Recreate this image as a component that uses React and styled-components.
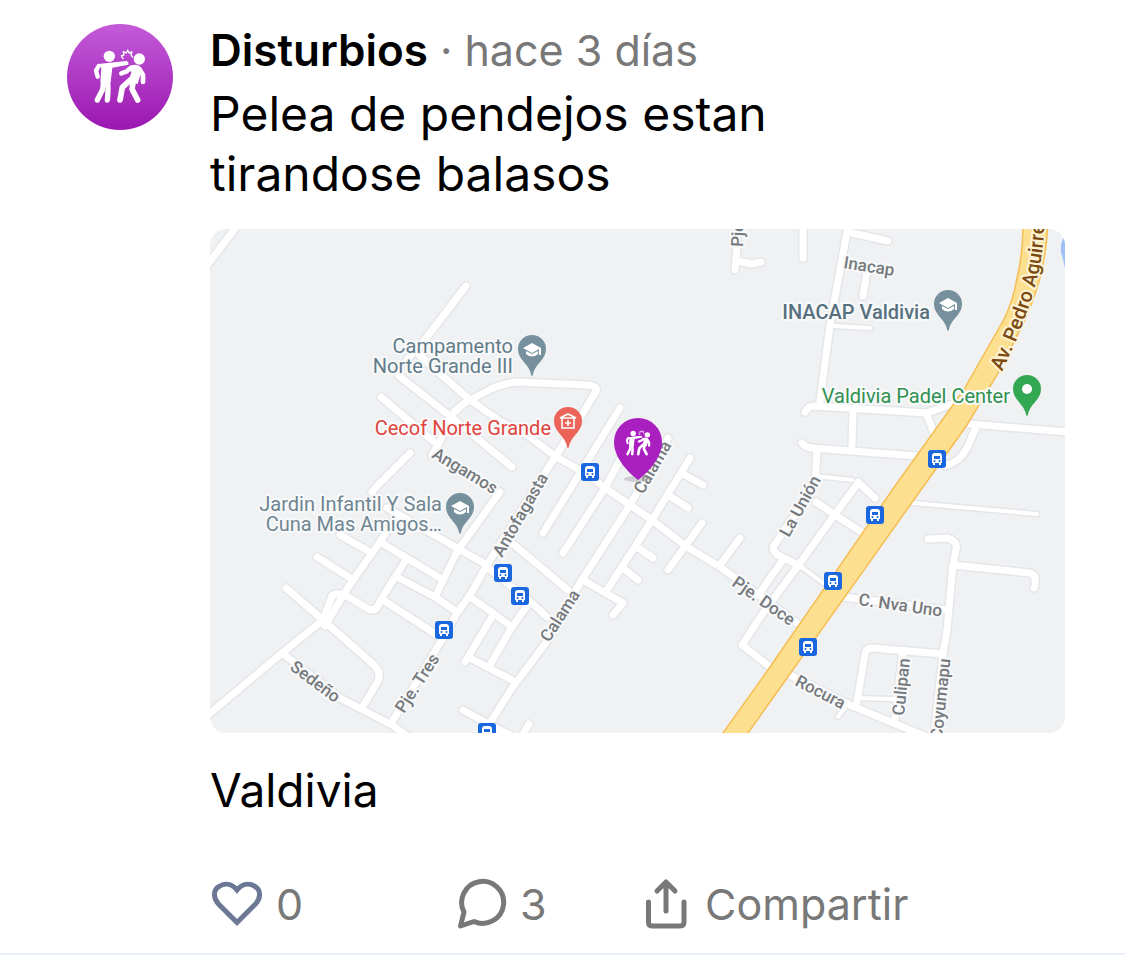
import React, { useState } from "react";
import styled, { createGlobalStyle } from "styled-components";

const GlobalStyle = createGlobalStyle`
  * {
    box-sizing: border-box;
  }
  body {
    margin: 0;
    background-color: #ffffff;
    font-family: Inter, "Liberation Sans", sans-serif;
  }
`;

const Post = styled.article`
  display: flex;
  align-items: flex-start;
  gap: 37px;
  padding: 24px 60px 19px 67px;
  border-bottom: 2px solid #e9eefb;
`;

const Avatar = styled.div`
  display: flex;
  align-items: center;
  justify-content: center;
  flex: none;
  width: 106px;
  height: 106px;
  border-radius: 50%;
  background: linear-gradient(#c35bd8, #9a17b0);
`;

const AvatarIcon = styled.svg`
  width: 56px;
  height: 56px;
`;

const Content = styled.div`
  flex: 1;
  min-width: 0;
`;

const Header = styled.header`
  display: flex;
  align-items: baseline;
  gap: 12px;
  font-size: 43px;
  line-height: 52px;
  color: #787878;
`;

const Category = styled.h1`
  margin: 0;
  font-size: 44px;
  font-weight: 600;
  color: #000000;
`;

const Message = styled.p`
  margin: 8px 0 25px;
  font-size: 48px;
  line-height: 60px;
  white-space: pre-line;
  color: #000000;
`;

const MapImage = styled.svg`
  display: block;
  width: 100%;
  height: auto;
  border-radius: 16px;
  background-color: #f0f1f3;
  font-family: Roboto, sans-serif;
`;

const Place = styled.p`
  margin: 27px 0 54px;
  font-size: 46px;
  line-height: 60px;
  color: #000000;
`;

const Actions = styled.footer`
  display: grid;
  grid-template-columns: 29% 22% auto;
  align-items: center;
`;

const Action = styled.button`
  display: flex;
  align-items: center;
  gap: ${(props) => props.$gap || "14px"};
  padding: 0;
  border: none;
  background: none;
  font-family: inherit;
  font-size: 43px;
  line-height: 60px;
  color: #787878;
  cursor: pointer;
`;

const ActionIcon = styled.svg`
  flex: none;
  width: ${(props) => props.$width || "52px"};
  height: 52px;
  fill: none;
  stroke: ${(props) => props.$color || "#787878"};
  stroke-width: 5;
  stroke-linecap: round;
  stroke-linejoin: ${(props) => props.$join || "round"};
`;

const RoadCasing = styled.path`
  fill: none;
  stroke: #e4e6e9;
  stroke-width: ${(props) => props.$size + 3};
  stroke-linecap: round;
  stroke-linejoin: round;
`;

const RoadFill = styled.path`
  fill: none;
  stroke: #ffffff;
  stroke-width: ${(props) => props.$size};
  stroke-linecap: round;
  stroke-linejoin: round;
`;

const RoadLabel = styled.text`
  font-size: ${(props) => props.$size || "17px"};
  font-weight: 500;
  fill: ${(props) => props.$color || "#76797d"};
  stroke: ${(props) => props.$halo || "#f8f9fa"};
  stroke-width: 4;
  stroke-linejoin: round;
  paint-order: stroke;
`;

const PlaceLabel = styled.text`
  font-size: 20px;
  font-weight: ${(props) => props.$weight || 400};
  text-anchor: end;
  fill: ${(props) => props.$color};
  stroke: #f8f9fa;
  stroke-width: 4;
  stroke-linejoin: round;
  paint-order: stroke;
`;

const thin = [
  "M833 326L870 328",
  "M913 503L1037 514",
  "M857 698L893 699",
  "M815 476L852 480",
  "M800 566L823 583",
  "M333 612L343 594",
  "M845 707L838 717",
];

const roads = [
  "M208 264L237 226",
  "M466 286L427 337L407 360",
  "M399 376L450 416L512 467",
  "M420 356L470 400L500 421L527 435L555 456L590 476L605 488L630 505L652 520L687 547L720 567L797 623",
  "M381 397L433 441",
  "M432 455L440 441L450 418Q458 406 470 400L487 391Q500 384 517 382L587 385Q600 386 595 393L580 418L548 468L487 565L470 595L457 613L440 643L392 722",
  "M410 453L377 486L372 492",
  "M340 535L370 552",
  "M395 518L380 542L353 580L345 592L325 626",
  "M387 508L457 548L487 565",
  "M317 557L352 579",
  "M286 588L323 620L373 664Q382 672 378 681L362 708",
  "M208 715L282 653L323 620L332 596Q336 592 345 595L370 610L376 609L382 598L407 558",
  "M380 542L440 578",
  "M397 577L435 597L457 612",
  "M383 600L437 635",
  "M500 492L458 550L435 597",
  "M282 653L340 698L392 725L410 738",
  "M470 597L493 613L512 627",
  "M493 615L465 662",
  "M470 658L512 680",
  "M490 665L512 627L527 606",
  "M463 710L492 726L512 736",
  "M488 726L512 688L548 640L580 583L630 505L668 438",
  "M563 553L605 488L622 456",
  "M543 533L572 486L620 408",
  "M512 543L568 590",
  "M487 567L532 603L547 617",
  "M583 580L623 603L613 615",
  "M607 590L652 520L690 458",
  "M637 547L653 558",
  "M623 568L638 580",
  "M668 495L688 508",
  "M683 474L703 485",
  "M702 523L668 570",
  "M740 538L720 565",
  "M521 738L529 724",
  "M737 226L737 246L735 270",
  "M737 261L752 264L761 262",
  "M803 226L803 258",
  "M848 226L830 325L820 401",
  "M852 233L888 241",
  "M867 271L863 296",
  "M805 412Q808 406 814 406L927 413L952 404",
  "M853 410L852 446",
  "M802 443Q806 448 812 448L917 456",
  "M927 415L935 436",
  "M970 424L1068 432",
  "M977 425L967 448Q960 462 945 466",
  "M817 450L815 485L773 547Q774 554 780 556L800 566",
  "M816 502L835 515L863 533",
  "M858 483L833 517L800 563L763 613L742 645L770 667L790 675",
  "M783 560L770 578L760 593",
  "M858 482L875 498",
  "M928 539L948 538Q958 542 956 549L953 565L947 630L943 653L934 738",
  "M953 565L1030 573Q1038 576 1034 588",
  "M843 597L945 610",
  "M943 654L872 648Q866 648 865 654L857 702",
  "M903 650L895 718",
  "M790 675L850 705L927 737",
];

const busStops = [
  [590, 472],
  [503, 573],
  [520, 596],
  [444, 630],
  [487, 732],
  [937, 459],
  [875, 515],
  [833, 581],
  [808, 647],
];

const roadLabels = [
  { text: "Angamos", x: 431, y: 457, angle: 31 },
  { text: "Antofagasta", x: 502, y: 558, angle: -60 },
  { text: "Calama", x: 549, y: 643, angle: -57 },
  { text: "Calama", x: 643, y: 495, angle: -60 },
  { text: "Pje. Tres", x: 404, y: 714, angle: -57 },
  { text: "Sedeño", x: 289, y: 669, angle: 37 },
  { text: "Pje. Doce", x: 731, y: 585, angle: 35 },
  { text: "La Unión", x: 789, y: 538, angle: -61 },
  { text: "C. Nva Uno", x: 858, y: 605, angle: 8 },
  { text: "Rocura", x: 794, y: 685, angle: 27 },
  { text: "Culipan", x: 904, y: 716, angle: -84 },
  { text: "Coyumapu", x: 942, y: 740, angle: -84 },
  { text: "Inacap", x: 843, y: 268, angle: 9 },
  { text: "Pje.", x: 743, y: 247, angle: -88 },
];

const FightShape = () => (
  <g fill="none" stroke="#ffffff" strokeLinecap="round" strokeLinejoin="round">
    <circle cx="177" cy="137" r="17" fill="#ffffff" stroke="none" />
    <circle cx="267" cy="145" r="17" fill="#ffffff" stroke="none" />
    <path
      d="M144 160L228 151Q236 153 234 162L186 171L181 215L150 215L153 172Z"
      fill="#ffffff"
      stroke="none"
    />
    <path d="M145 166L137 180L142 198" strokeWidth="13" />
    <path d="M160 210L157 236L141 268" strokeWidth="16" />
    <path d="M171 208Q175 230 171 268" strokeWidth="16" />
    <path
      d="M236 168Q250 158 268 166Q276 174 271 190L262 220L234 212L243 186Z"
      fill="#ffffff"
      stroke="none"
    />
    <path d="M242 171L229 182L213 188" strokeWidth="14" />
    <path d="M268 176L278 193L278 214" strokeWidth="14" />
    <path d="M243 205L216 230L209 268" strokeWidth="17" />
    <path d="M249 212L245 235L262 268" strokeWidth="17" />
    <path
      d="M218 144L213 135L221 133L219 123L228 127L232 118L236 127L245 124L242 133L247 139"
      strokeWidth="4"
    />
  </g>
);

const BusStop = ({ x, y }) => (
  <g transform={`translate(${x} ${y})`}>
    <rect x="-9" y="-9" width="18" height="18" rx="3" fill="#1a67e0" />
    <path
      d="M-5 4V-3Q-5 -6 -2 -6H2Q5 -6 5 -3V4H4V6H2V4H-2V6H-4V4Z"
      fill="#ffffff"
    />
    <path d="M-3 -3H3V0H-3Z" fill="#1a67e0" />
    <circle cx="-2.5" cy="2" r="1" fill="#1a67e0" />
    <circle cx="2.5" cy="2" r="1" fill="#1a67e0" />
  </g>
);

const Pin = ({ x, y, color, children }) => (
  <g transform={`translate(${x} ${y})`}>
    <path
      d="M0 27C-1 27 -1 24 -2 22C-5 14 -14 10 -14 0A14 14 0 0 1 14 0C14 10 5 14 2 22C1 24 1 27 0 27Z"
      fill={color}
    />
    {children}
  </g>
);

const SchoolPin = ({ x, y }) => (
  <Pin x={x} y={y} color="#76909d">
    <path d="M-9 -1L0 -6L9 -1V6H7V0L0 4Z" fill="#ffffff" />
    <path d="M-6 2L0 5L6 2V5Q0 10 -6 5Z" fill="#ffffff" />
  </Pin>
);

const ZoneMap = () => (
  <MapImage viewBox="210 229 855 504" role="img" aria-label="Valdivia">
    <path d="M1066 236Q1060 240 1061 252Q1064 262 1066 274Z" fill="#9dc1f8" />
    {thin.map((d) => (
      <RoadCasing key={d} d={d} $size={4} />
    ))}
    {roads.map((d) => (
      <RoadCasing key={d} d={d} $size={7} />
    ))}
    {thin.map((d) => (
      <RoadFill key={d} d={d} $size={4} />
    ))}
    {roads.map((d) => (
      <RoadFill key={d} d={d} $size={7} />
    ))}
    <path
      d="M1023 220Q1023 255 1017 278Q1013 302 1003 321L963 391L895 486L770 667L718 740L743 740L770 702L928 480L967 425L997 375Q1012 346 1022 326Q1034 300 1040 278Q1047 250 1048 220Z"
      fill="#fce08f"
      stroke="#f6bd55"
      strokeWidth="1.5"
    />
    {roadLabels.map((r) => (
      <RoadLabel
        key={r.x}
        transform={`translate(${r.x} ${r.y}) rotate(${r.angle})`}
      >
        {r.text}
      </RoadLabel>
    ))}
    <path
      id="avenue"
      d="M1002 372Q1016 342 1023 323Q1035 292 1040 266Q1044 245 1046 200"
      fill="none"
    />
    <RoadLabel $size="20px" $color="#7b4a12" $halo="#fdf3d4">
      <textPath href="#avenue">Av. Pedro Aguirre</textPath>
    </RoadLabel>
    {busStops.map(([x, y]) => (
      <BusStop key={x} x={x} y={y} />
    ))}

    <PlaceLabel x="513" y="353" $color="#627c89">
      Campamento
    </PlaceLabel>
    <PlaceLabel x="513" y="373" $color="#627c89">
      Norte Grande III
    </PlaceLabel>
    <SchoolPin x={532} y={349} />
    <PlaceLabel x="551" y="435" $color="#e0443e">
      Cecof Norte Grande
    </PlaceLabel>
    <Pin x={568} y={421} color="#ec6359">
      <path
        d="M-6 -3V7H6V-3M-8 -3L0 -7L8 -3ZM0 -1V5M-3 2H3"
        fill="none"
        stroke="#ffffff"
        strokeWidth="1.6"
      />
    </Pin>
    <PlaceLabel x="442" y="511" $color="#6f8591">
      Jardin Infantil Y Sala
    </PlaceLabel>
    <PlaceLabel x="442" y="531" $color="#6f8591">
      Cuna Mas Amigos…
    </PlaceLabel>
    <SchoolPin x={460} y={507} />
    <PlaceLabel x="930" y="319" $color="#56707e" $weight={500}>
      INACAP Valdivia
    </PlaceLabel>
    <SchoolPin x={948} y={304} />
    <PlaceLabel x="1010" y="403" $color="#2f9150">
      Valdivia Padel Center
    </PlaceLabel>
    <Pin x={1027} y={389} color="#33a853">
      <circle r="5" fill="#ffffff" />
    </Pin>

    <ellipse cx="637" cy="479" rx="13" ry="3" fill="#9a9aa0" opacity="0.4" />
    <path
      d="M638 480C630 474 614 459 614 442A24 24 0 0 1 662 442C662 459 646 474 638 480Z"
      fill="#a91fc0"
    />
    <svg x="625" y="429" width="26" height="28" viewBox="125 112 165 170">
      <FightShape />
    </svg>
  </MapImage>
);

const App = () => {
  const [liked, setLiked] = useState(false);

  return (
    <>
      <GlobalStyle />
      <Post>
        <Avatar>
          <AvatarIcon viewBox="125 115 168 168">
            <FightShape />
          </AvatarIcon>
        </Avatar>
        <Content>
          <Header>
            <Category>Disturbios</Category>
            <span>·</span>
            <time>hace 3 días</time>
          </Header>
          <Message>{"Pelea de pendejos estan\ntirandose balasos"}</Message>
          <ZoneMap />
          <Place>Valdivia</Place>
          <Actions>
            <Action
              type="button"
              aria-pressed={liked}
              onClick={() => setLiked(!liked)}
            >
              <ActionIcon viewBox="0 0 52 52" $color="#6b7794" $join="miter">
                <path d="M27 44.500L8.500 26C3 20 3 12 9 8.500C15 4.500 22 6 27 12C32 6 39 4.500 45 8.500C51 12 51 20 45.500 26Z" />
              </ActionIcon>
              {liked ? 1 : 0}
            </Action>
            <Action type="button" $gap="12px">
              <ActionIcon viewBox="0 0 50 52" $width="50px">
                <path d="M6 34A21 21 0 1 1 16 43.500L2.500 48Z" />
              </ActionIcon>
              3
            </Action>
            <Action type="button" $gap="18px">
              <ActionIcon viewBox="0 0 41 52" $width="41px">
                <path d="M2.500 24V44Q2.500 48 6 48H34Q38 48 38 44V24M20 33V4M11 13L20 4L29 13" />
              </ActionIcon>
              Compartir
            </Action>
          </Actions>
        </Content>
      </Post>
    </>
  );
};

export default App;
